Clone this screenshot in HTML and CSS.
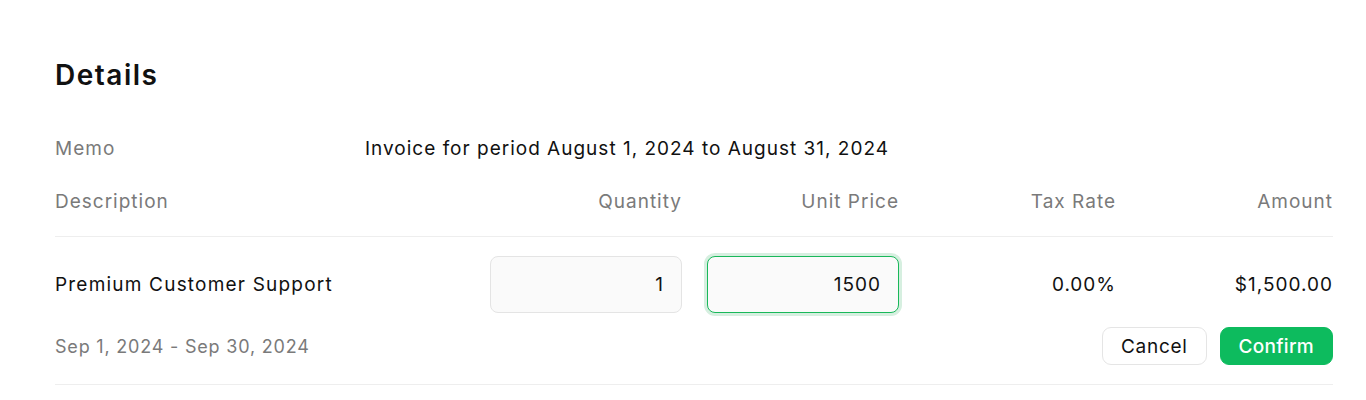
FILE: index.html
```html
<!DOCTYPE html>
<html>
<head>
<meta charset="utf-8">
<link rel="stylesheet" href="styles.css">
</head>
<body>
<div class="page">
  <h1 class="title">Details</h1>
  <div class="memo">
    <span class="label">Memo</span>
    <span class="memo-value">Invoice for period August 1, 2024 to August 31, 2024</span>
  </div>
  <div class="grid head">
    <span class="label">Description</span>
    <span class="label right">Quantity</span>
    <span class="label right">Unit Price</span>
    <span class="label right">Tax Rate</span>
    <span class="label right">Amount</span>
  </div>
  <div class="item">
    <div class="grid row">
      <span class="desc">Premium Customer Support</span>
      <div class="field">1</div>
      <div class="field focus">1500</div>
      <span class="right">0.00%</span>
      <span class="right">$1,500.00</span>
    </div>
    <div class="sub">
      <span class="label period">Sep 1, 2024 - Sep 30, 2024</span>
      <div class="actions">
        <button class="btn cancel">Cancel</button>
        <button class="btn confirm">Confirm</button>
      </div>
    </div>
  </div>
</div>
</body>
</html>
```
FILE: styles.css
```css
* { box-sizing: border-box; }
body {
  margin: 0;
  background: #ffffff;
  font-family: Inter, "Noto Sans", sans-serif;
  color: #111111;
  font-size: 19px;
  letter-spacing: 1px;
}
.page {
  padding: 57px 33px 0 55px;
}
.title {
  margin: 0;
  font-size: 28px;
  font-weight: 600;
  line-height: 36px;
  letter-spacing: 1.5px;
}
.memo {
  display: flex;
  margin-top: 44px;
  line-height: 24px;
}
.memo .label { width: 310px; }
.label { color: #7a7a7a; }
.right { text-align: right; }
.desc { letter-spacing: 1.2px; }
.period {
  font-size: 18px;
  letter-spacing: 0.8px;
}
.grid {
  display: grid;
  grid-template-columns: 1fr repeat(4, 192px);
  column-gap: 25px;
  align-items: center;
}
.head {
  margin-top: 29px;
  line-height: 24px;
  padding-bottom: 22px;
  border-bottom: 1px solid #eeeeee;
}
.item {
  border-bottom: 1px solid #eeeeee;
  padding-top: 19px;
  padding-bottom: 19px;
}
.field {
  height: 57px;
  border: 1px solid #e4e4e4;
  border-radius: 8px;
  background: #fafafa;
  display: flex;
  align-items: center;
  justify-content: flex-end;
  padding-right: 17px;
}
.field.focus {
  border-color: #19b85a;
  box-shadow: 0 0 0 3px #d6efe0;
}
.sub {
  display: flex;
  justify-content: space-between;
  align-items: center;
  margin-top: 14px;
}
.actions {
  display: flex;
  gap: 13px;
}
.btn {
  font-family: Inter, "Noto Sans", sans-serif;
  font-size: 19px;
  height: 38px;
  border-radius: 9px;
  padding: 0 18px;
  cursor: pointer;
}
.cancel {
  background: #ffffff;
  border: 1px solid #e5e5e5;
  color: #111111;
  letter-spacing: 0.7px;
}
.confirm {
  background: #0dbb5e;
  border: 1px solid #0dbb5e;
  color: #ffffff;
  font-weight: 500;
  letter-spacing: 0.3px;
}
```
